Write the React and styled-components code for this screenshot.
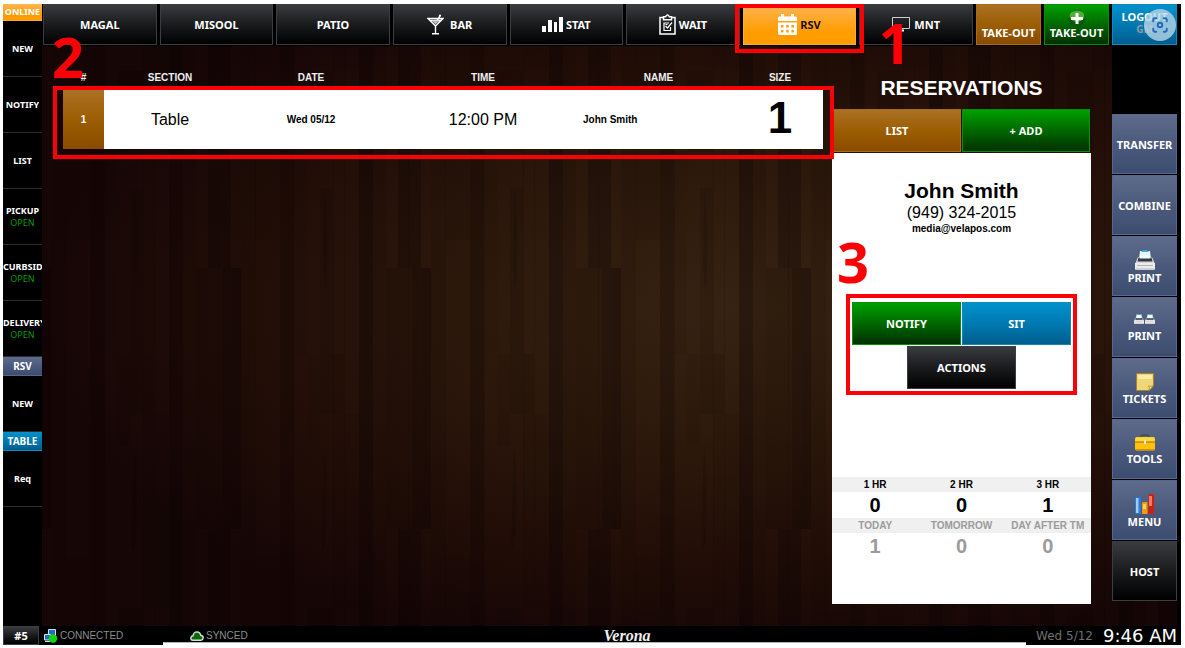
import styled, { createGlobalStyle, css } from "styled-components"
import { Focus } from "lucide-react"

const planks = [
    [0, 117, 9, 261, 0.32],
    [9, 0, 14, 537, 0.1],
    [23, 0, 25, 89, 0.1],
    [23, 405, 25, 132, 0.1],
    [48, 0, 14, 537, 0.24],
    [62, 0, 13, 203, 0.05],
    [75, 203, 13, 92, 0.08],
    [75, 457, 26, 80, 0.13],
    [88, 37, 13, 166, 0.11],
    [88, 203, 24, 60, 0.12],
    [101, 263, 26, 194, 0.07],
    [127, 0, 14, 537, 0.3],
    [141, 0, 13, 537, 0.1],
    [154, 117, 36, 261, 0.15],
    [166, 0, 23, 117, 0.26],
    [166, 378, 23, 159, 0.26],
    [180, 117, 10, 261, 0.16],
]

const Wood = () => (
    <WoodSvg aria-hidden="true">
        <defs>
            <radialGradient id="glow" cx="0.62" cy="0.45" r="0.62">
                <stop offset="0" stopColor="#372312" />
                <stop offset="0.35" stopColor="#2e1a0c" />
                <stop offset="0.7" stopColor="#220e07" />
                <stop offset="1" stopColor="#160606" />
            </radialGradient>
            <pattern id="planks" y="105" width="190" height="537" patternUnits="userSpaceOnUse">
                {planks.map(([x, y, w, h, o], i) => (
                    <rect key={i} x={x} y={y} width={w} height={h} fill="#080102" opacity={o} />
                ))}
                <path d="M23.500 0v537M62.500 0v537M101.500 0v537M112.500 0v537M176.500 0v537" stroke="#000" opacity="0.12" />
                <path d="M92 37q5 40 3 80q-1 40-4 0zM92 295q4 30 2 90q-3 30-5 0z" fill="#000" opacity="0.14" />
            </pattern>
        </defs>
        <rect width="100%" height="100%" fill="url(#glow)" />
        <rect width="100%" height="100%" fill="url(#planks)" />
    </WoodSvg>
)

const MartiniIcon = () => (
    <svg width="17" height="21" viewBox="0 0 17 21" fill="none" stroke="#fff" strokeWidth="1.400">
        <path d="M1 4.500h15L8.500 12zM8.500 12v7.500M5 19.800h7M3 6.500h11M9 8l4-6" />
        <path d="M4.500 6.500h8l-4 4z" fill="#bbb" stroke="none" />
        <circle cx="13" cy="1.600" r="1.100" fill="#fff" stroke="none" />
    </svg>
)

const BarsIcon = () => (
    <svg width="21" height="15" viewBox="0 0 21 15" fill="#fff">
        <path d="M0 9h4v6H0zM6 3h4v12H6zM12 5h3v10h-3zM17 0h4v15h-4z" />
    </svg>
)

const ClipboardIcon = () => (
    <svg width="17" height="21" viewBox="0 0 17 21" fill="none" stroke="#fff" strokeWidth="1.500">
        <path d="M4 3.500H1v16.500h15V3.500h-3" />
        <path d="M4.500 2.700h2.200q1.800-3.200 3.600 0h2.200v3h-8z" />
        <path d="M10 9H5v7.500h6.500V13M6.500 12l2 2 4.500-5.500M6.500 10.500h2" strokeWidth="1.200" />
    </svg>
)

const CalendarIcon = () => (
    <svg width="19" height="21" viewBox="0 0 19 21">
        <path d="M1.500 2.500H3V0h3v2.500h7V0h3v2.500h1.500Q19 2.500 19 4v3H0V4q0-1.500 1.500-1.500zM0 8.500h19v11q0 1.500-1.500 1.500h-16Q0 21 0 19.500z" fill="#fff" />
        <path d="M3 11h2.500v2.500H3zM8.200 11h2.500v2.500H8.200zM13.400 11h2.500v2.500h-2.500zM3 16h2.500v2.500H3zM8.200 16h2.500v2.500H8.200zM13.400 16h2.500v2.500h-2.500z" fill="#ff9f0c" />
    </svg>
)

const MonitorIcon = () => (
    <svg width="18" height="15" viewBox="0 0 18 15" fill="none" stroke="#cfcfcf">
        <path d="M.5.5h17v11H.5z" />
        <path d="M6 13.500h6" stroke="#fff" strokeWidth="2" />
    </svg>
)

const PlusIcon = () => (
    <svg width="18" height="17" viewBox="0 0 18 17">
        <circle cx="9" cy="8.500" r="8.500" fill="#0b5a0b" />
        <ellipse cx="9" cy="6" rx="7.500" ry="5.500" fill="#4fae3a" />
        <path d="M7.500 3h3v4H15v3h-4.500v4h-3v-4H3V7h4.500z" fill="#fff" />
    </svg>
)

const PrinterIcon = ({ size = 20 }) => (
    <svg width={size} height={size} viewBox="0 0 20 20">
        <path d="M5 1h10l1 8H4z" fill="#e8f6fd" />
        <path d="M8 0h4l2 2H6z" fill="#3fa9dc" />
        <path d="M3 7h14l3 7H0z" fill="#d9d9d9" />
        <path d="M3.500 7.500h13l1 4h-15z" fill="#333a40" />
        <path d="M5 5h10l.5 3.500h-11z" fill="#f2fbff" />
        <path d="M0 13h20v5.500q0 1.500-1.500 1.500h-17Q0 20 0 18.500z" fill="#ededed" />
        <path d="M2 15.500h16M1 19h18" stroke="#b5b5b5" />
    </svg>
)

const PrinterPairIcon = () => (
    <Pair>
        <PrinterIcon size={10} />
        <PrinterIcon size={10} />
    </Pair>
)

const NoteIcon = () => (
    <svg width="18" height="18" viewBox="0 0 18 18">
        <path d="M.5.5h17v12.500l-4.500 4.500H.5z" fill="#efd778" stroke="#a9802b" />
        <path d="M2 2h14v4H2z" fill="#f8eba6" />
        <path d="M17.500 12.500L13 17.500q1-3-.5-4.500 2 1 5-.5z" fill="#fff4bd" stroke="#a9802b" strokeWidth=".8" />
    </svg>
)

const ToolboxIcon = () => (
    <svg width="20" height="17" viewBox="0 0 20 17">
        <path d="M6 3.500Q6 1 8 1h4q2 0 2 2.500" fill="none" stroke="#4a4a4a" strokeWidth="1.300" />
        <rect y="3" width="20" height="13.500" rx="1.500" fill="#ffc20a" />
        <path d="M1 3.500h18l1 4H0z" fill="#ffda3c" />
        <path d="M0 8h20" stroke="#d07c00" strokeWidth="1.300" />
        <path d="M9 6.500h2v3.500H9z" fill="#f3f3f3" />
        <path d="M0 15.500h20" stroke="#e58d00" />
    </svg>
)

const ChartIcon = () => (
    <svg width="19" height="20" viewBox="0 0 19 20">
        <path d="M0 4l1-1h5v17H0z" fill="#2f79cf" />
        <path d="M1 4h2.500v15H1z" fill="#9ccdf5" />
        <path d="M7 9l1-1h4.500v12H7z" fill="#f79a0a" />
        <path d="M8 10h3v5H8z" fill="#ffd45a" />
        <path d="M13.500 1l1-1H19v20h-5.500z" fill="#cf1f12" />
        <path d="M14 2h3v10h-3z" fill="#f47a62" />
    </svg>
)

const NetworkIcon = () => (
    <svg width="14" height="14" viewBox="0 0 14 14">
        <path d="M4.500.5h7v6h-7z" fill="#1b70c4" stroke="#d5dde3" />
        <path d="M.5 5.500h6v5.500h-6z" fill="#1b70c4" stroke="#d5dde3" />
        <path d="M1 12.500h6" stroke="#d5dde3" />
        <circle cx="9" cy="9.500" r="4.200" fill="#0fd70f" />
    </svg>
)

const CloudIcon = () => (
    <svg width="14" height="10" viewBox="0 0 14 10">
        <path d="M3 9.200Q.7 9 .8 7 1 5 3 4.800 3.600 1 7 .9q3 .1 3.800 3.400Q13.300 4.800 13.200 7q-.2 2-2.200 2.200z" fill="#0a6a0a" stroke="#dcdcdc" strokeWidth="1.400" />
    </svg>
)

const sideItems = [
    { label: "NEW" },
    { label: "NOTIFY" },
    { label: "LIST" },
    { label: "PICKUP", state: "OPEN" },
    { label: "CURBSIDE", state: "OPEN" },
    { label: "DELIVERY", state: "OPEN" },
]

const tools = [
    { label: "TRANSFER" },
    { label: "COMBINE" },
    { label: "PRINT", icon: <PrinterIcon /> },
    { label: "PRINT", icon: <PrinterPairIcon /> },
    { label: "TICKETS", icon: <NoteIcon /> },
    { label: "TOOLS", icon: <ToolboxIcon /> },
    { label: "MENU", icon: <ChartIcon /> },
    { label: "HOST", tone: "dark" },
]

export default function App() {
    return (
        <Page>
            <GlobalStyle />
            <Screen>
                <Body>
                    <SideNav>
                        <SideTag $tone="orange" $small>ONLINE</SideTag>
                        {sideItems.map(({ label, state }) => (
                            <SideItem key={label}>
                                <span>{label}</span>
                                {state && <small>{state}</small>}
                            </SideItem>
                        ))}
                        <SideTag $tone="slate">RSV</SideTag>
                        <SideItem><span>NEW</span></SideItem>
                        <SideTag $tone="blue">TABLE</SideTag>
                        <SideItem><span>Req</span></SideItem>
                    </SideNav>
                    <Main>
                        <TopBar>
                            <Tabs>
                                <Button>MAGAL</Button>
                                <Button>MISOOL</Button>
                                <Button>PATIO</Button>
                                <Button><MartiniIcon />BAR</Button>
                                <Button $gap={3}><BarsIcon />STAT</Button>
                                <Button $gap={3}><ClipboardIcon />WAIT</Button>
                                <TabSlot>
                                    <Button $tone="orange" $gap={3}><CalendarIcon />RSV</Button>
                                    <Callout $top={0} $right={-8} $bottom={-8} $left={-8}>
                                        <Step $top={14} $left={140}>1</Step>
                                    </Callout>
                                </TabSlot>
                                <Button $gap={4}><MonitorIcon />MNT</Button>
                            </Tabs>
                            <TopAction $tone="brown">TAKE-OUT</TopAction>
                            <TopAction $tone="green"><PlusIcon />TAKE-OUT</TopAction>
                            <LogoutSlot>
                                <TopAction $tone="blue" $top>
                                    LOGOUT
                                    <small>GM</small>
                                </TopAction>
                                <Lens><Focus size={18} strokeWidth={2.5} /></Lens>
                            </LogoutSlot>
                        </TopBar>
                        <Content>
                            <Wood />
                            <ListArea>
                                <TableWrap>
                                    <Table>
                                        <colgroup>
                                            <col width="41" />
                                            <col width="132" />
                                            <col width="150" />
                                            <col width="194" />
                                            <col width="157" />
                                            <col width="86" />
                                        </colgroup>
                                        <thead>
                                            <tr>
                                                <th>#</th>
                                                <th>SECTION</th>
                                                <th>DATE</th>
                                                <th>TIME</th>
                                                <th>NAME</th>
                                                <th>SIZE</th>
                                            </tr>
                                        </thead>
                                        <tbody>
                                            <tr>
                                                <NumberCell>1</NumberCell>
                                                <BigCell>Table</BigCell>
                                                <td>Wed 05/12</td>
                                                <BigCell>12:00 PM</BigCell>
                                                <NameCell>John Smith</NameCell>
                                                <SizeCell>1</SizeCell>
                                            </tr>
                                        </tbody>
                                    </Table>
                                    <Callout $top={22} $right={-11} $bottom={-10} $left={-10}>
                                        <Step $top={-54} $left={-5}>2</Step>
                                    </Callout>
                                </TableWrap>
                            </ListArea>
                            <Panel>
                                <h1>RESERVATIONS</h1>
                                <PanelTabs>
                                    <Button $tone="brown">LIST</Button>
                                    <Button $tone="green">+ ADD</Button>
                                </PanelTabs>
                                <Card>
                                    <h2>John Smith</h2>
                                    <Phone>(949) 324-2015</Phone>
                                    <Email>media@velapos.com</Email>
                                    <Actions>
                                        <Button $tone="green">NOTIFY</Button>
                                        <Button $tone="blue">SIT</Button>
                                        <Button>ACTIONS</Button>
                                        <Callout $top={-8} $right={-6} $bottom={-6} $left={-6}>
                                            <Step $top={-57} $left={-13}>3</Step>
                                        </Callout>
                                    </Actions>
                                    <Stats>
                                        <tbody>
                                            <tr><th>1 HR</th><th>2 HR</th><th>3 HR</th></tr>
                                            <tr><td>0</td><td>0</td><td>1</td></tr>
                                            <MutedRow><th>TODAY</th><th>TOMORROW</th><th>DAY AFTER TM</th></MutedRow>
                                            <MutedRow><td>1</td><td>0</td><td>0</td></MutedRow>
                                        </tbody>
                                    </Stats>
                                </Card>
                            </Panel>
                            <Tools>
                                {tools.map(({ label, icon, tone = "slate" }, i) => (
                                    <ToolButton key={i} $tone={tone}>
                                        {icon}
                                        {label}
                                    </ToolButton>
                                ))}
                            </Tools>
                        </Content>
                    </Main>
                </Body>
                <StatusBar>
                    <Station>#5</Station>
                    <StatusItem><NetworkIcon />CONNECTED</StatusItem>
                    <StatusItem><CloudIcon />SYNCED</StatusItem>
                    <Brand>Verona</Brand>
                    <Today>Wed 5/12</Today>
                    <Clock>9:46 AM</Clock>
                </StatusBar>
            </Screen>
        </Page>
    )
}

const GlobalStyle = createGlobalStyle`
    * {
        box-sizing: border-box;
    }

    body {
        margin: 0;
        background: #fff;
        font-family: "Liberation Sans", Arial, sans-serif;
    }

    h1, h2, p {
        margin: 0;
    }
`

const tones = {
    dark: css`
        background: linear-gradient(#3a3b3f, #1a1b1d 50%, #000);
        border-color: #3a3d42;
    `,
    orange: css`
        background: linear-gradient(#ffb452, #ff9c00 70%);
        border-color: #ffa83a;
    `,
    brown: css`
        background: linear-gradient(#ab7124, #9a5c00 55%, #8a4b00);
        border-color: #ab6b14;
    `,
    green: css`
        background: linear-gradient(#00a000, #006200 55%, #003000);
        border-color: #058f05;
    `,
    blue: css`
        background: linear-gradient(#0091cd, #0077ae 55%, #005e8e);
        border-color: #0f8abf;
    `,
    slate: css`
        background: linear-gradient(#5e6b8b, #4b5a7c 50%, #3d4d70);
        border-color: #566790;
    `,
}

const Page = styled.div`
    display: flex;
    min-height: 100vh;
    padding: 4px 4px 3px 3px;
`

const Screen = styled.div`
    flex: 1;
    display: flex;
    flex-direction: column;
    min-width: 0;
    background: #000;
`

const Body = styled.div`
    flex: 1;
    display: flex;
`

const SideNav = styled.nav`
    width: 39px;
    flex: none;
    display: flex;
    flex-direction: column;
`

const Button = styled.button`
    display: flex;
    align-items: center;
    justify-content: center;
    gap: ${({ $gap = 6 }) => $gap}px;
    min-width: 0;
    padding: 0;
    border: 1px solid;
    color: #fff;
    font: bold 11px/14px "Noto Sans", Tahoma, sans-serif;
    ${({ $tone = "dark" }) => tones[$tone]}

    & > svg {
        flex: none;
    }
`

const SideTag = styled(Button)`
    height: ${({ $small }) => ($small ? 17 : 19)}px;
    border-width: 0 0 1px;
    font-size: ${({ $small }) => ($small ? 9 : 10)}px;
`

const SideItem = styled.button`
    display: flex;
    flex-direction: column;
    align-items: center;
    justify-content: center;
    height: 56px;
    padding: 0;
    border: none;
    border-bottom: 1px solid #2c2c2c;
    background: #000;
    color: #fff;
    font: bold 9px/12px "Noto Sans", Tahoma, sans-serif;

    & > span {
        max-width: 100%;
        overflow: hidden;
    }

    & > small {
        color: #009a00;
        font: 9px/12px "Noto Sans", Tahoma, sans-serif;
    }
`

const Main = styled.main`
    flex: 1;
    display: flex;
    flex-direction: column;
    min-width: 0;
`

const TopBar = styled.div`
    display: flex;
    gap: 3px;
    height: 42px;
    padding: 0 4px 1px 1px;
`

const Tabs = styled.div`
    flex: 1;
    display: grid;
    grid-template-columns: repeat(8, minmax(0, 1fr));
    gap: 3px;
`

const TabSlot = styled.div`
    position: relative;
    display: grid;

    & > button {
        color: #1c0d00;
    }
`

const TopAction = styled(Button)`
    width: 65px;
    flex-direction: column;
    justify-content: ${({ $top }) => ($top ? "flex-start" : "flex-end")};
    gap: 0;
    padding: ${({ $top }) => ($top ? "6px 0 0" : "0 0 5px")};
    line-height: 12px;

    & > small {
        color: #8c9aa3;
        font-size: 10px;
    }
`

const LogoutSlot = styled.div`
    position: relative;
    display: flex;
`

const Lens = styled.span`
    position: absolute;
    top: 5px;
    right: 1px;
    display: grid;
    place-items: center;
    width: 32px;
    height: 32px;
    border-radius: 50%;
    background: rgba(184, 214, 232, 0.8);
    color: #2468b8;
`

const Content = styled.div`
    position: relative;
    flex: 1;
    display: flex;
    border-right: 4px solid #000;
`

const WoodSvg = styled.svg`
    position: absolute;
    inset: 0;
    width: 100%;
    height: 100%;
`

const ListArea = styled.section`
    flex: 1;
    min-width: 0;
    padding: 18px 9px 0 21px;
`

const TableWrap = styled.div`
    position: relative;
`

const Table = styled.table`
    width: 100%;
    table-layout: fixed;
    border-collapse: collapse;
    text-align: center;
    font-size: 10px;
    font-weight: bold;

    & th {
        height: 26px;
        padding: 0;
        color: #eee;
    }

    & td {
        height: 59px;
        padding: 0;
        background: #fff;
        color: #000;
    }
`

const NumberCell = styled.td`
    && {
        background: linear-gradient(#ab7124, #9a5c00 55%, #8a4b00);
        color: #fff;
    }
`

const BigCell = styled.td`
    font-size: 16px;
    font-weight: normal;
`

const NameCell = styled.td`
    text-align: left;

    && {
        padding-left: 3px;
    }
`

const SizeCell = styled.td`
    font-size: 44px;
    line-height: 44px;

    && {
        padding-bottom: 3px;
    }
`

const Callout = styled.div`
    position: absolute;
    z-index: 2;
    top: ${({ $top }) => $top}px;
    right: ${({ $right }) => $right}px;
    bottom: ${({ $bottom }) => $bottom}px;
    left: ${({ $left }) => $left}px;
    border: 4px solid #fb0007;
    pointer-events: none;
`

const Step = styled.span`
    position: absolute;
    top: ${({ $top }) => $top}px;
    left: ${({ $left }) => $left}px;
    color: #fb0007;
    font: bold 56px/40px "Noto Sans", sans-serif;
`

const Panel = styled.section`
    position: relative;
    display: flex;
    flex-direction: column;
    width: 259px;
    margin-right: 21px;
    padding: 29px 0 22px;

    & > h1 {
        margin-bottom: 8px;
        color: #fff;
        text-align: center;
        font-size: 21px;
        line-height: 26px;
    }
`

const PanelTabs = styled.div`
    display: grid;
    grid-template-columns: 1fr 1fr;
    gap: 1px;
    height: 44px;
    padding: 0 1px 1px;
`

const Card = styled.article`
    flex: 1;
    padding-top: 26px;
    background: #fff;
    color: #000;
    text-align: center;

    & > h2 {
        font-size: 21px;
        line-height: 24px;
    }
`

const Phone = styled.p`
    font-size: 16px;
    line-height: 20px;
`

const Email = styled.p`
    font-size: 10px;
    line-height: 12px;
    font-weight: bold;
`

const Actions = styled.div`
    position: relative;
    display: flex;
    flex-wrap: wrap;
    justify-content: center;
    gap: 1px;
    margin: 67px 20px 88px;

    & > button {
        width: 109px;
        height: 43px;
    }
`

const Stats = styled.table`
    width: 100%;
    table-layout: fixed;
    border-collapse: collapse;

    & th {
        height: 15px;
        padding: 0;
        background: #f0f0f0;
        font-size: 10px;
        line-height: 15px;
        white-space: nowrap;
    }

    & td {
        height: 26px;
        padding: 0;
        font-size: 20px;
        font-weight: bold;
        line-height: 26px;
    }
`

const MutedRow = styled.tr`
    color: #9b9b9b;
`

const Tools = styled.aside`
    position: relative;
    align-self: flex-start;
    display: flex;
    flex-direction: column;
    gap: 1px;
    width: 65px;
    padding-top: 68px;
    background: #000;
`

const ToolButton = styled(Button)`
    flex-direction: column;
    gap: 1px;
    height: 60px;
    padding-top: 2px;
`

const Pair = styled.span`
    display: flex;
    gap: 1px;
    margin-bottom: 4px;
`

const StatusBar = styled.footer`
    position: relative;
    display: grid;
    grid-template-columns: 41px 146px 60px 1fr auto 84px;
    align-items: center;
    height: 19px;
    padding-right: 4px;
    background: #000;

    &::after {
        content: "";
        position: absolute;
        right: 155px;
        bottom: 0;
        left: 160px;
        height: 2px;
        border-top: 1px solid #b5b5b5;
        background: #fff;
    }
`

const Station = styled(Button)`
    width: 36px;
    height: 19px;
`

const StatusItem = styled.span`
    display: flex;
    align-items: center;
    gap: 2px;
    color: #8d8d8d;
    font-size: 10px;
`

const Brand = styled.em`
    padding-right: 32px;
    color: #eee;
    text-align: center;
    font: italic bold 16px/18px "Liberation Serif", serif;
`

const Today = styled.span`
    color: #6f6f6f;
    font: 12px/18px "DejaVu Sans", sans-serif;
`

const Clock = styled.time`
    color: #fff;
    text-align: right;
    white-space: nowrap;
    font: 18px/18px "DejaVu Sans", sans-serif;
`
